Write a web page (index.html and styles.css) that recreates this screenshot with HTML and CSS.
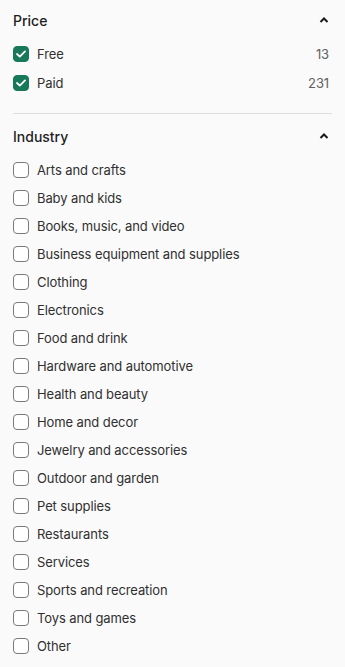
FILE: index.html
```html
<!DOCTYPE html>
<html lang="en">
  <head>
    <meta charset="UTF-8">
    <meta name="viewport" content="width=device-width, initial-scale=1">
    <title>Filters</title>
    <link rel="stylesheet" href="styles.css">
  </head>
  <body>
    <div class="filter filter-price">
      <div class="filter-head">
        <h3>Price</h3>
        <svg class="chevron" width="12" height="8" viewBox="0 0 12 8"><path d="M2.5 6 L6 2.5 L9.5 6" fill="none" stroke="#1a1a1a" stroke-width="2"/></svg>
      </div>
      <ul class="filter-list">
        <li class="row row-price"><span class="box checked"><svg width="10" height="8" viewBox="0 0 10 8"><path d="M1 4 L3.8 6.6 L9 1.4" fill="none" stroke="#fff" stroke-width="1.8" stroke-linecap="round" stroke-linejoin="round"/></svg></span><span class="label">Free</span><span class="count">13</span></li>
        <li class="row row-price"><span class="box checked"><svg width="10" height="8" viewBox="0 0 10 8"><path d="M1 4 L3.8 6.6 L9 1.4" fill="none" stroke="#fff" stroke-width="1.8" stroke-linecap="round" stroke-linejoin="round"/></svg></span><span class="label">Paid</span><span class="count">231</span></li>
      </ul>
    </div>
    <hr class="divider">
    <div class="filter filter-industry">
      <div class="filter-head">
        <h3>Industry</h3>
        <svg class="chevron" width="12" height="8" viewBox="0 0 12 8"><path d="M2.5 6 L6 2.5 L9.5 6" fill="none" stroke="#1a1a1a" stroke-width="2"/></svg>
      </div>
      <ul class="filter-list">
        <li class="row"><span class="box"></span><span class="label">Arts and crafts</span></li>
        <li class="row"><span class="box"></span><span class="label">Baby and kids</span></li>
        <li class="row"><span class="box"></span><span class="label">Books, music, and video</span></li>
        <li class="row"><span class="box"></span><span class="label">Business equipment and supplies</span></li>
        <li class="row"><span class="box"></span><span class="label">Clothing</span></li>
        <li class="row"><span class="box"></span><span class="label">Electronics</span></li>
        <li class="row"><span class="box"></span><span class="label">Food and drink</span></li>
        <li class="row"><span class="box"></span><span class="label">Hardware and automotive</span></li>
        <li class="row"><span class="box"></span><span class="label">Health and beauty</span></li>
        <li class="row"><span class="box"></span><span class="label">Home and decor</span></li>
        <li class="row"><span class="box"></span><span class="label">Jewelry and accessories</span></li>
        <li class="row"><span class="box"></span><span class="label">Outdoor and garden</span></li>
        <li class="row"><span class="box"></span><span class="label">Pet supplies</span></li>
        <li class="row"><span class="box"></span><span class="label">Restaurants</span></li>
        <li class="row"><span class="box"></span><span class="label">Services</span></li>
        <li class="row"><span class="box"></span><span class="label">Sports and recreation</span></li>
        <li class="row"><span class="box"></span><span class="label">Toys and games</span></li>
        <li class="row"><span class="box"></span><span class="label">Other</span></li>
      </ul>
    </div>
  </body>
</html>
```

FILE: styles.css
```css
html, body {
  margin: 0;
  background-color: #fafafa;
  color: #303030;
  font-family: Inter, "Noto Sans", sans-serif;
}

body {
  padding: 8px 13px 0 13px;
}

.filter-head {
  display: flex;
  align-items: center;
  justify-content: space-between;
  height: 24px;
}

.filter-head h3 {
  margin: 0;
  font-size: 14px;
  font-weight: 500;
  color: #1f1f1f;
}

.chevron {
  margin-right: 2px;
}

.filter-list {
  list-style: none;
  margin: 8px 0 0 0;
  padding: 0;
}

.row {
  display: flex;
  align-items: center;
  height: 28px;
  font-size: 13px;
  letter-spacing: -0.1px;
}

.row-price + .row-price {
  margin-top: 1px;
}

.box {
  width: 14px;
  height: 14px;
  border: 1px solid #7a7a7a;
  border-radius: 4px;
  background-color: white;
  display: flex;
  align-items: center;
  justify-content: center;
  flex-shrink: 0;
}

.box.checked {
  background-color: #17795a;
  border-color: #17795a;
}

.label {
  margin-left: 8px;
  flex: 1;
}

.count {
  color: #616161;
  margin-right: 3px;
}

.divider {
  border: none;
  border-top: 1px solid #dedede;
  margin: 16px 0 10px 0;
}
```
